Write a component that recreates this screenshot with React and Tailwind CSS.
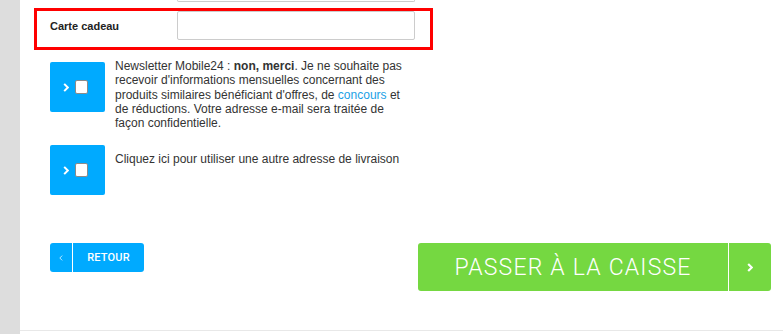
import React from 'react';

const font = { fontFamily: '"Liberation Sans", Arial, sans-serif' };

function Chevron({ className, dir = 'right', stroke = 2 }) {
  return (
    <svg viewBox="0 0 6 10" className={className} fill="none">
      <polyline
        points={dir === 'right' ? '1,1 5,5 1,9' : '5,1 1,5 5,9'}
        stroke="white"
        strokeWidth={stroke}
        strokeLinejoin="miter"
      />
    </svg>
  );
}

function CheckTile() {
  return (
    <div className="w-[55px] h-[50px] shrink-0 bg-[#00aaff] rounded-[2px] flex items-center pl-[13px] gap-[6px]">
      <Chevron className="w-[6px] h-[9px]" stroke={2.2} />
      <div className="w-[13px] h-[14px] bg-white border border-[#8a8a8a] rounded-[2px]" />
    </div>
  );
}

export default function App() {
  return (
    <div className="w-[783px] h-[334px] flex bg-white overflow-hidden" style={font}>
      <div className="w-[20px] shrink-0 bg-[#dddddd]" />
      <div className="flex-1 flex flex-col">
        {/* bottom of previous input */}
        <div className="ml-[157px] w-[238px] h-[2px] border-x border-b border-[#cccccc] rounded-b-[2px]" />

        {/* highlighted gift card row */}
        <div className="ml-[14px] mt-[6px] w-[399px] h-[42px] border-[3px] border-[#ff0000] flex items-start">
          <div className="w-[140px] pl-[13px] pt-[7px] text-[11px] font-bold text-[#222]">Carte cadeau</div>
          <div className="w-[238px] h-[29px] border border-[#cccccc] rounded-[2px] bg-white" />
        </div>

        {/* newsletter */}
        <div className="ml-[30px] mt-[9px] flex items-start">
          <div className="mt-[3px]">
            <CheckTile />
          </div>
          <p className="ml-[10px] w-[292px] text-[12px] leading-[14.3px] text-[#333]">
            Newsletter Mobile24 : <b>non, merci</b>. Je ne souhaite pas recevoir d'informations mensuelles
            concernant des produits similaires bénéficiant d'offres, de{' '}
            <span className="text-[#1a9fe6]">concours</span> et de réductions. Votre adresse e-mail sera
            traitée de façon confidentielle.
          </p>
        </div>

        {/* other address */}
        <div className="ml-[30px] mt-[15px] flex items-start">
          <CheckTile />
          <p className="ml-[10px] mt-[7px] text-[12px] leading-[14px] text-[#333]">
            Cliquez ici pour utiliser une autre adresse de livraison
          </p>
        </div>

        {/* buttons */}
        <div className="mt-[48px] pl-[30px] pr-[12px] flex justify-between items-start">
          <button className="h-[29px] w-[94px] bg-[#00aaff] rounded-[3px] flex items-stretch text-white">
            <span className="w-[23px] flex items-center justify-center border-r border-white">
              <Chevron className="w-[4px] h-[6px]" dir="left" stroke={1.2} />
            </span>
            <span
              className="flex-1 flex items-center justify-center text-[11px] font-medium tracking-[0.2px]"
              style={{ fontFamily: 'Roboto, "Liberation Sans", sans-serif' }}
            >
              RETOUR
            </span>
          </button>

          <button className="h-[48px] w-[353px] bg-[#75d841] rounded-[3px] flex items-stretch text-white">
            <span
              className="w-[311px] flex items-center justify-center border-r border-white text-[23px] font-light tracking-[1.2px] pt-[2px]"
              style={{ fontFamily: 'Roboto, "Liberation Sans", sans-serif' }}
            >
              PASSER À LA CAISSE
            </span>
            <span className="flex-1 flex items-center justify-center">
              <Chevron className="w-[6px] h-[9px]" stroke={2.4} />
            </span>
          </button>
        </div>

        <div className="mt-[39px] h-px bg-[#e8e8e8]" />
      </div>
    </div>
  );
}
